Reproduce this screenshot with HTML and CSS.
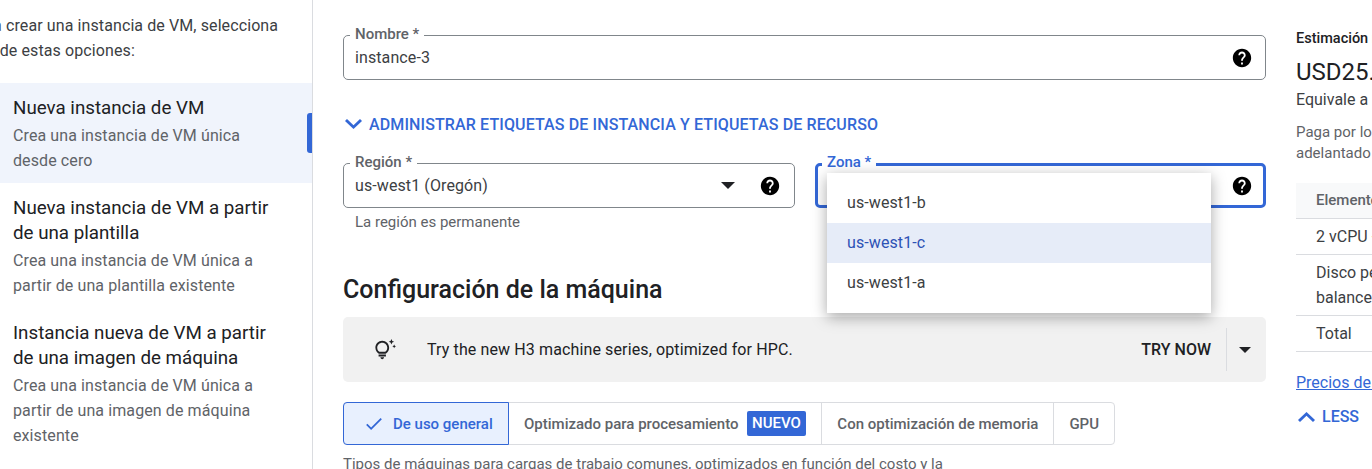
FILE: index.html
```html
<!DOCTYPE html>
<html lang="es">
<head>
    <meta charset="UTF-8">
    <link rel="stylesheet" href="styles.css">
    <title>Crear una instancia</title>
</head>
<body>
    <nav class="sidebar">
        <p class="intro">Para crear una instancia de VM, selecciona una de estas opciones:</p>
        <div class="option selected">
            <div class="option-title">Nueva instancia de VM</div>
            <div class="option-desc">Crea una instancia de VM única desde cero</div>
            <span class="indicator"></span>
        </div>
        <div class="option">
            <div class="option-title">Nueva instancia de VM a partir de una plantilla</div>
            <div class="option-desc">Crea una instancia de VM única a partir de una plantilla existente</div>
        </div>
        <div class="option">
            <div class="option-title">Instancia nueva de VM a partir de una imagen de máquina</div>
            <div class="option-desc">Crea una instancia de VM única a partir de una imagen de máquina existente</div>
        </div>
    </nav>

    <main class="form">
        <div class="field">
            <span class="field-label">Nombre *</span>
            <span class="field-value">instance-3</span>
            <svg class="help" viewBox="0 0 24 24"><path d="M12 2C6.48 2 2 6.48 2 12s4.48 10 10 10 10-4.48 10-10S17.52 2 12 2zm1 17h-2v-2h2v2zm2.07-7.75l-.9.92C13.45 12.9 13 13.5 13 15h-2v-.5c0-1.1.45-2.1 1.17-2.83l1.24-1.26c.37-.36.59-.86.59-1.41 0-1.1-.9-2-2-2s-2 .9-2 2H8c0-2.21 1.79-4 4-4s4 1.79 4 4c0 .88-.36 1.68-.93 2.25z"/></svg>
        </div>

        <div class="expander">
            <svg class="chevron" viewBox="6 8.59 12 7.41" preserveAspectRatio="none"><path d="M16.59 8.59L12 13.17 7.41 8.59 6 10l6 6 6-6z"/></svg>
            <span>Administrar etiquetas de instancia y etiquetas de recurso</span>
        </div>

        <div class="location">
            <div>
                <div class="field">
                    <span class="field-label">Región *</span>
                    <span class="field-value">us-west1 (Oregón)</span>
                    <span class="arrow"></span>
                    <svg class="help" viewBox="0 0 24 24"><path d="M12 2C6.48 2 2 6.48 2 12s4.48 10 10 10 10-4.48 10-10S17.52 2 12 2zm1 17h-2v-2h2v2zm2.07-7.75l-.9.92C13.45 12.9 13 13.5 13 15h-2v-.5c0-1.1.45-2.1 1.17-2.83l1.24-1.26c.37-.36.59-.86.59-1.41 0-1.1-.9-2-2-2s-2 .9-2 2H8c0-2.21 1.79-4 4-4s4 1.79 4 4c0 .88-.36 1.68-.93 2.25z"/></svg>
                </div>
                <div class="hint">La región es permanente</div>
            </div>
            <div class="field focused">
                <span class="field-label">Zona *</span>
                <span class="field-value"></span>
                <svg class="help" viewBox="0 0 24 24"><path d="M12 2C6.48 2 2 6.48 2 12s4.48 10 10 10 10-4.48 10-10S17.52 2 12 2zm1 17h-2v-2h2v2zm2.07-7.75l-.9.92C13.45 12.9 13 13.5 13 15h-2v-.5c0-1.1.45-2.1 1.17-2.83l1.24-1.26c.37-.36.59-.86.59-1.41 0-1.1-.9-2-2-2s-2 .9-2 2H8c0-2.21 1.79-4 4-4s4 1.79 4 4c0 .88-.36 1.68-.93 2.25z"/></svg>
                <ul class="menu">
                    <li>us-west1-b</li>
                    <li class="active">us-west1-c</li>
                    <li>us-west1-a</li>
                </ul>
            </div>
        </div>

        <h2>Configuración de la máquina</h2>

        <div class="banner">
            <svg class="bulb" viewBox="0 0 24 24"><path d="M7 20h4c0 1.1-.9 2-2 2s-2-.9-2-2zm-2-1h8v-2H5v2zm11.5-9.5c0 3.82-2.66 5.86-3.77 6.5H5.27C4.16 15.36 1.5 13.32 1.5 9.5 1.5 5.36 4.86 2 9 2s7.5 3.36 7.5 7.5zm-2 0C14.5 6.47 12.03 4 9 4S3.5 6.47 3.5 9.5c0 2.47 1.49 3.89 2.35 4.5h6.3c.86-.61 2.35-2.03 2.35-4.5zm6.87-2.13L20 8l1.37.63L22 10l.63-1.37L24 8l-1.37-.63L22 6l-.63 1.37zM19 6l.94-2.06L22 3l-2.06-.94L19 0l-.94 2.06L16 3l2.06.94L19 6z"/></svg>
            <span class="banner-text">Try the new H3 machine series, optimized for HPC.</span>
            <span class="banner-btn">TRY NOW</span>
            <span class="banner-split"><span class="arrow small"></span></span>
        </div>

        <div class="tabs">
            <div class="tab selected">
                <svg class="check" viewBox="3.41 5.59 17.59 13.41"><path d="M9 16.17L4.83 12l-1.42 1.41L9 19 21 7l-1.41-1.41z"/></svg>
                De uso general
            </div>
            <div class="tab">Optimizado para procesamiento <span class="badge">NUEVO</span></div>
            <div class="tab">Con optimización de memoria</div>
            <div class="tab">GPU</div>
        </div>

        <p class="tab-desc">Tipos de máquinas para cargas de trabajo comunes, optimizados en función del costo y la flexibilidad</p>
    </main>

    <aside class="estimate">
        <div class="est-title">Estimación mensual</div>
        <div class="est-price">USD25.46</div>
        <div class="est-hour">Equivale a aproximadamente USD0.03 por hora</div>
        <p class="est-note">Paga por lo que usas: sin pagos por<br>adelantado y facturación por segundo</p>
        <table>
            <thead>
                <tr><th>Elemento</th><th>Estimación mensual</th></tr>
            </thead>
            <tbody>
                <tr><td>2 vCPU + 4 GB de memoria</td><td>USD24.46</td></tr>
                <tr><td>Disco persistente<br>balanceado de 10 GB</td><td>USD1.00</td></tr>
                <tr><td>Total</td><td>USD25.46</td></tr>
            </tbody>
        </table>
        <a class="est-link" href="#">Precios de Compute Engine</a>
        <div class="less">
            <svg class="chevron" viewBox="6 8 12 7.41" preserveAspectRatio="none"><path d="M12 8l-6 6 1.41 1.41L12 10.83l4.59 4.58L18 14z"/></svg>
            <span>LESS</span>
        </div>
    </aside>
</body>
</html>
```

FILE: styles.css
```css
html, body {
    height: 469px;
    overflow: hidden;
}

body {
    display: flex;
    margin: 0;
    font-family: Roboto, "Liberation Sans", sans-serif;
    color: #202124;
    background-color: white;
}

/* left column */
.sidebar {
    flex: 0 0 313px;
    box-sizing: border-box;
    height: 469px;
    overflow: hidden;
    border-right: 1px solid #dadce0;
}

.intro {
    margin: 13px 25px 20px -31px;
    font-size: 16px;
    letter-spacing: 0.1px;
    line-height: 25px;
    color: #3c4043;
}

.option {
    position: relative;
    padding: 12.5px 30px 10.5px 13px;
}

.option.selected {
    background-color: #f0f4fc;
}

.option-title {
    font-size: 18.75px;
    line-height: 25px;
    color: #202124;
}

.option-desc {
    margin-top: 2px;
    font-size: 16px;
    letter-spacing: 0.1px;
    line-height: 25px;
    color: #5f6368;
}

.indicator {
    position: absolute;
    right: 0;
    top: 30px;
    width: 5px;
    height: 40px;
    border-radius: 3px 0 0 3px;
    background-color: #3367d6;
}

/* form */
.form {
    flex: 0 0 923px;
    margin-left: 30px;
    padding-top: 35px;
}

.field {
    position: relative;
    display: flex;
    align-items: center;
    box-sizing: border-box;
    height: 45px;
    padding: 0 12px 0 11px;
    border: 1px solid #80868b;
    border-radius: 5px;
}

.location .field {
    padding-right: 13px;
}

.location .field.focused {
    padding: 0 10px 0 9px;
    border: 3px solid #3367d6;
}

.field-label {
    position: absolute;
    left: 6px;
    top: -12px;
    padding: 0 5px;
    font-size: 15px;
    font-weight: 500;
    line-height: 20px;
    color: #5f6368;
    background-color: white;
}

.focused .field-label {
    left: 4px;
    top: -14px;
    color: #3367d6;
}

.field-value {
    flex: 1;
    font-size: 16px;
    letter-spacing: 0.1px;
    color: #3c4043;
}

.help {
    width: 22px;
    height: 22px;
    fill: #000;
}

.arrow {
    width: 0;
    height: 0;
    margin-right: 24px;
    border-left: 7.5px solid transparent;
    border-right: 7.5px solid transparent;
    border-top: 7.5px solid #202124;
}

.arrow.small {
    margin: 0;
    border-left-width: 6px;
    border-right-width: 6px;
    border-top-width: 6px;
}

.expander {
    display: flex;
    align-items: center;
    gap: 7px;
    height: 24px;
    margin: 32px 0 27px 2px;
    font-size: 16px;
    font-weight: 500;
    letter-spacing: 0.12px;
    text-transform: uppercase;
    color: #3367d6;
}

.chevron {
    width: 17px;
    height: 10px;
    fill: #3367d6;
}

.location {
    display: grid;
    grid-template-columns: 452px 451px;
    gap: 20px;
}

.hint {
    margin: 4px 0 0 12px;
    font-size: 15px;
    line-height: 20px;
    color: #5f6368;
}

.menu {
    position: absolute;
    left: 9px;
    top: 7px;
    z-index: 5;
    width: 384px;
    margin: 0;
    padding: 10px 0;
    list-style: none;
    background-color: white;
    box-shadow: 0 4px 14px rgba(0, 0, 0, 0.35);
}

.menu li {
    height: 40px;
    padding-left: 20px;
    font-size: 16px;
    letter-spacing: 0.1px;
    line-height: 40px;
    color: #3c4043;
}

.menu li.active {
    background-color: #e6ecf8;
    color: #2d52b5;
}

h2 {
    margin: 43px 0 12px;
    font-size: 25px;
    font-weight: 500;
    line-height: 30px;
    color: #202124;
}

.banner {
    display: flex;
    align-items: center;
    height: 65px;
    border-radius: 5px;
    background-color: #f1f1f1;
}

.bulb {
    width: 22px;
    height: 22px;
    margin: 0 31px;
    fill: #202124;
}

.banner-text {
    flex: 1;
    font-size: 16px;
    letter-spacing: 0.12px;
    color: #202124;
}

.banner-btn {
    font-size: 16px;
    font-weight: 500;
    color: #202124;
}

.banner-split {
    display: flex;
    align-items: center;
    justify-content: center;
    width: 36px;
    height: 43px;
    margin: 0 3px 0 15px;
    border-left: 1px solid #dadce0;
}

.tabs {
    display: flex;
    width: 772px;
    height: 43px;
    margin-top: 20px;
    box-sizing: border-box;
    border: 1px solid #dadce0;
    border-radius: 4px;
}

.tab {
    display: flex;
    align-items: center;
    padding: 0 15px;
    font-size: 15px;
    font-weight: 500;
    color: #5f6368;
    border-left: 1px solid #dadce0;
}

.tab:first-child {
    border-left: none;
}

.tab.selected {
    width: 166px;
    box-sizing: border-box;
    margin: -1px 0 -1px -1px;
    padding: 0 0 0 22px;
    color: #3367d6;
    background-color: #e8f0fe;
    border: 1px solid #3367d6;
    border-radius: 4px 0 0 4px;
}

.tab.selected + .tab {
    border-left: none;
}

.check {
    width: 16px;
    height: 12px;
    margin-right: 11px;
    fill: #3367d6;
}

.badge {
    margin-left: 8px;
    padding: 0 5.5px;
    font-size: 15px;
    font-weight: 500;
    line-height: 25px;
    color: white;
    background-color: #3367d6;
    border-radius: 2px;
}

.tab-desc {
    width: 620px;
    margin: 7px 0 0;
    font-size: 15px;
    line-height: 25px;
    color: #5f6368;
}

/* right column */
.estimate {
    flex: 0 0 340px;
    margin-left: 30px;
    padding-top: 29px;
    white-space: nowrap;
}

.est-title {
    font-size: 14.5px;
    font-weight: 500;
    line-height: 20px;
}

.est-price {
    margin-top: 7px;
    font-size: 24px;
    line-height: 32px;
}

.est-hour {
    font-size: 16px;
    line-height: 24px;
    color: #3c4043;
}

.est-note {
    margin: 10px 0 19px;
    font-size: 15px;
    line-height: 21px;
    color: #5f6368;
}

table {
    width: 340px;
    border-collapse: collapse;
    font-size: 16px;
}

th, td {
    padding: 5px 20px;
    text-align: left;
    line-height: 25px;
    border-bottom: 1px solid #dadce0;
    color: #3c4043;
}

th {
    font-size: 15px;
    font-weight: 500;
    color: #5f6368;
    background-color: #f8f9fa;
}

.est-link {
    display: block;
    margin-top: 21px;
    font-size: 16px;
    line-height: 20px;
    color: #3367d6;
    text-decoration: underline;
}

.less {
    display: flex;
    align-items: center;
    gap: 7px;
    margin: 14px 0 0 2px;
    font-size: 16px;
    font-weight: 500;
    line-height: 20px;
    color: #3367d6;
}
```
